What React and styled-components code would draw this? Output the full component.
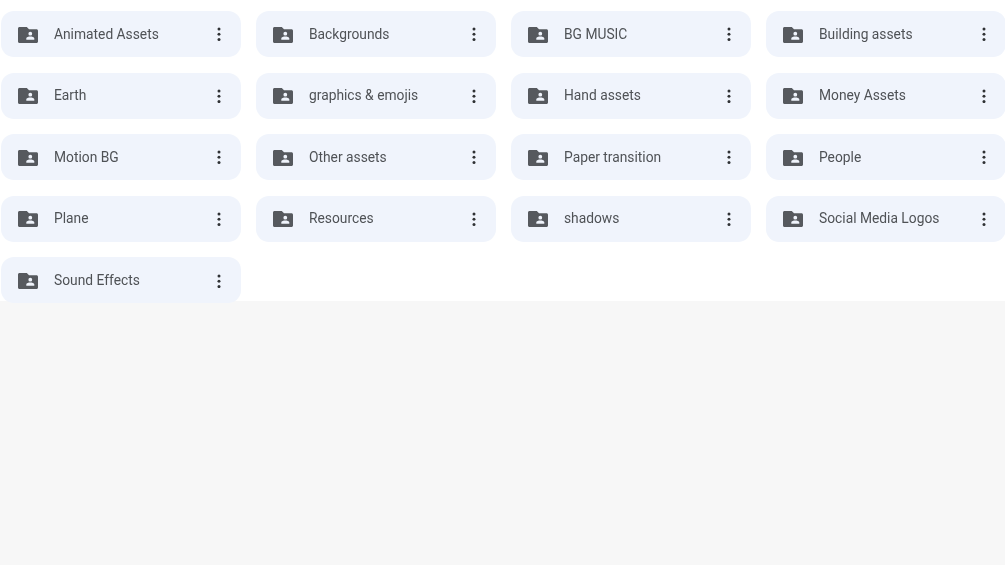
import styled, { createGlobalStyle } from "styled-components";

const folders = [
  "Animated Assets", "Backgrounds", "BG MUSIC", "Building assets",
  "Earth", "graphics & emojis", "Hand assets", "Money Assets",
  "Motion BG", "Other assets", "Paper transition", "People",
  "Plane", "Resources", "shadows", "Social Media Logos",
  "Sound Effects",
];

const FolderIcon = () => (
  <IconSvg viewBox="0 0 20 16" aria-hidden="true">
    <path
      fillRule="evenodd"
      d="M1.500 0H8.800L11 2.300H18.500C19.300 2.300 20 3 20 3.800V14.500C20 15.300 19.300 16 18.500 16H1.500C.7 16 0 15.300 0 14.500V1.500C0 .7.7 0 1.500 0ZM12.300 4.800A1.900 1.900 0 1 0 12.300 8.600 1.900 1.900 0 0 0 12.300 4.800ZM8.300 11.300V12.800H16.300V11.300C16.300 10 13.900 9.400 12.300 9.400S8.300 10 8.300 11.300Z"
    />
  </IconSvg>
);

const DotsIcon = () => (
  <DotsSvg viewBox="0 0 4 14.600" aria-hidden="true">
    <circle cx="2" cy="2" r="1.500" />
    <circle cx="2" cy="7.300" r="1.500" />
    <circle cx="2" cy="12.600" r="1.500" />
  </DotsSvg>
);

const App = () => {
  return (
    <Page>
      <GlobalStyle />
      <FolderArea>
        <FolderGrid>
          {folders.map((name) => (
            <FolderCard key={name}>
              <FolderIcon />
              <FolderName>{name}</FolderName>
              <DotsIcon />
            </FolderCard>
          ))}
        </FolderGrid>
      </FolderArea>
      <EmptyArea />
    </Page>
  );
};

const GlobalStyle = createGlobalStyle`
  html, body {
    margin: 0;
    background: #ffffff;
  }
`;
const Page = styled.div`
  width: 1005px;
  height: 565px;
  overflow: hidden;
  display: flex;
  flex-direction: column;
  font-family: Roboto, "Liberation Sans", sans-serif;
`;
const FolderArea = styled.div`
  position: relative;
  z-index: 1;
  height: 301px;
  padding: 11px 0 0 0.5px;
  box-sizing: border-box;
`;
const FolderGrid = styled.div`
  display: grid;
  grid-template-columns: repeat(4, 240px);
  grid-auto-rows: 46px;
  column-gap: 15px;
  row-gap: 15.600px;
`;
const FolderCard = styled.div`
  display: flex;
  align-items: center;
  padding: 0 20px 0 17px;
  background: #f0f4fc;
  border-radius: 13px;
`;
const IconSvg = styled.svg`
  width: 20px;
  height: 16px;
  flex: none;
  margin-top: 1px;
  fill: #56595e;
  filter: blur(0.4px);
`;
const FolderName = styled.span`
  flex: 1;
  margin: 0 0 0.900px 16.500px;
  font-size: 13.800px;
  color: #4f5256;
  white-space: nowrap;
  filter: blur(0.45px);
`;
const DotsSvg = styled.svg`
  width: 4px;
  height: 14.600px;
  flex: none;
  margin-top: 1px;
  fill: #2f3134;
  filter: blur(0.3px);
`;
const EmptyArea = styled.div`
  flex: 1;
  background: #f7f7f7;
`;

export default App;
